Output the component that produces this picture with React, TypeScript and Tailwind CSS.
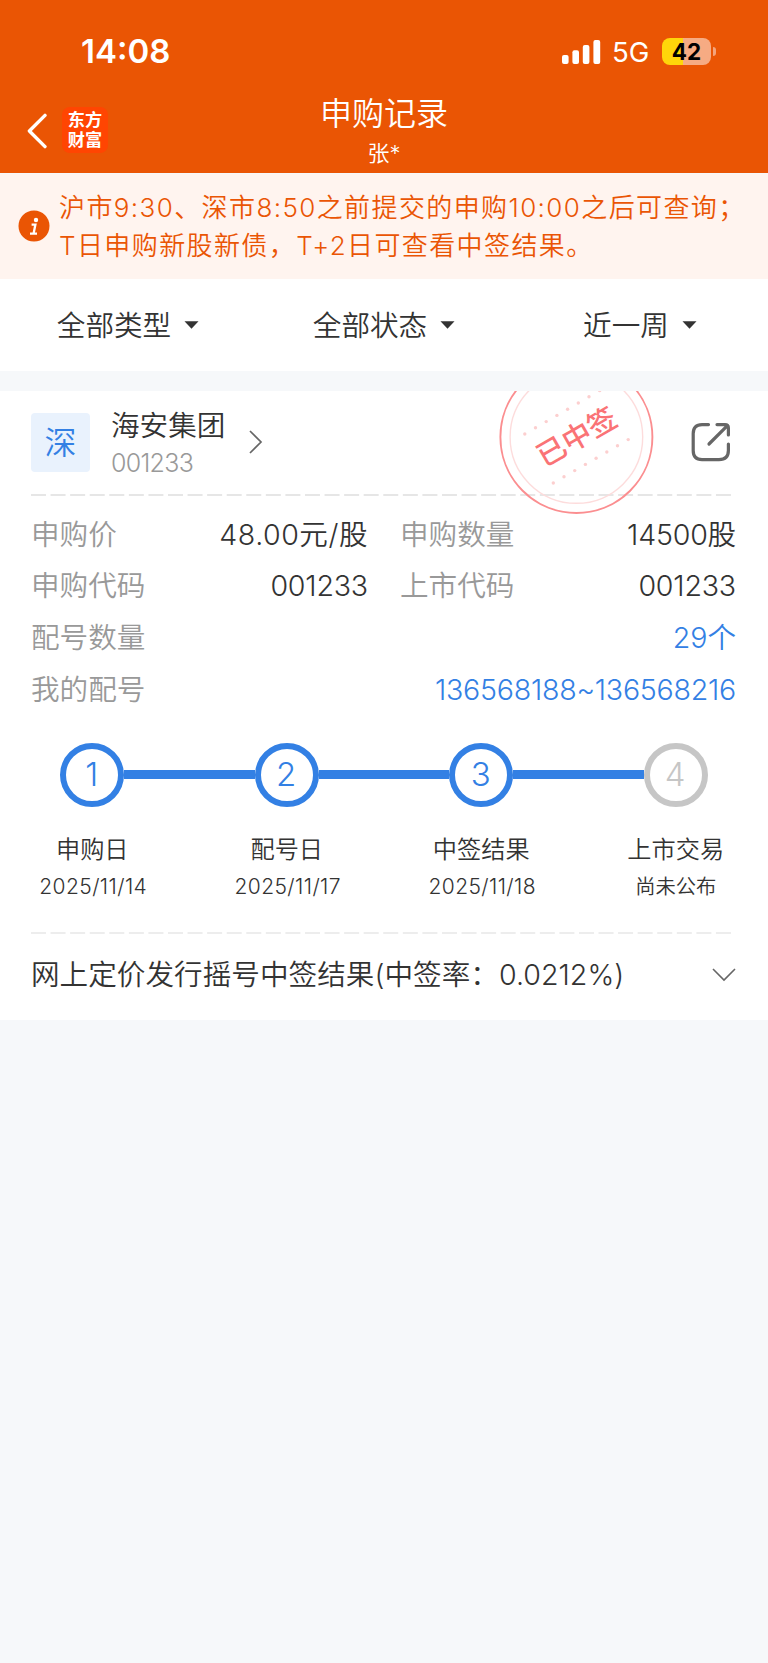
const FONT = "font-['Inter','Noto_Sans_CJK_SC',sans-serif]";

function StatusBar() {
  return (
    <div className="flex h-[103px] items-center justify-between pl-[81px] pr-[52px]">
      <div className="-mt-px text-[33px] leading-[40px] font-semibold">14:08</div>
      <div className="flex items-center">
        <svg className="h-[24px] w-[39px]" viewBox="0 0 39 24" fill="currentColor">
          <rect x="0" y="15" width="6.6" height="9" rx="2" />
          <rect x="10.4" y="10.3" width="6.6" height="13.7" rx="2" />
          <rect x="20.8" y="5" width="6.6" height="19" rx="2" />
          <rect x="31.4" y="0" width="6.8" height="24" rx="2" />
        </svg>
        <div className="ml-[11px] w-[38px] text-[27.6px] leading-[32px] font-normal whitespace-nowrap">5G</div>
        <div className="ml-[12px] flex h-[27px] w-[49px] items-center justify-center rounded-[8px] bg-[linear-gradient(90deg,#ffd60a_43%,#f6ab83_43%)] text-[22.5px] leading-[27px] font-bold text-black">
          42
        </div>
        <div className="ml-[2px] h-[9px] w-[3px] rounded-r-full bg-[#f4a47c]" />
      </div>
    </div>
  );
}

function TitleBar() {
  return (
    <div className="grid h-[70px] grid-cols-[1fr_auto_1fr]">
      <div className="flex items-start pt-[4px] pl-[26px]">
        <svg className="mt-[6px] h-[36px] w-[22px]" viewBox="0 0 22 36" fill="none" stroke="currentColor" strokeWidth="3.4" strokeLinecap="round" strokeLinejoin="round">
          <path d="M19 2.4 L3.4 18 L19 33.6" />
        </svg>
        <div className="ml-[14px] flex h-[46px] w-[46px] flex-col items-center justify-center rounded-[8px] bg-[#ff4502] text-[17.2px] leading-[20px] font-bold">
          <div>东方</div>
          <div>财富</div>
        </div>
      </div>
      <div className="flex flex-col items-center">
        <div className="-mt-[9px] text-[32px] leading-[40px]">申购记录</div>
        <div className="mt-[5px] text-[22px] leading-[28px]">张*</div>
      </div>
      <div />
    </div>
  );
}

function Notice() {
  return (
    <div className="mt-px flex h-[105px] items-center bg-[#fff4ef] pl-[18px] text-[#ea5504]">
      <svg className="-mt-px h-[32px] w-[32px]" viewBox="0 0 32 32">
        <circle cx="16" cy="16" r="15.5" fill="#ea5504" />
        <circle cx="18" cy="10" r="2.2" fill="#fff" />
        <path d="M13.6 14.6 H17.4 L15.6 23.4 M12 23.6 H19" fill="none" stroke="#fff" strokeWidth="2.3" />
      </svg>
      <div className="ml-[9px] text-[26px] leading-[37.5px] tracking-[1.4px] whitespace-nowrap">
        <div>沪市9:30、深市8:50之前提交的申购10:00之后可查询；</div>
        <div>T日申购新股新债，T+2日可查看中签结果。</div>
      </div>
    </div>
  );
}

function Filters() {
  return (
    <div className="grid h-[92px] grid-cols-3 bg-white pt-[2px]">
      {["全部类型", "全部状态", "近一周"].map((name) => (
        <div key={name} className="flex items-center justify-center text-[28.6px] leading-[40px]">
          {name}
          <svg className="-mt-[2px] ml-[13px] h-[8px] w-[15px]" viewBox="0 0 15 8">
            <path d="M0.5 0.3 H14.5 L7.5 7.8 Z" fill="#333" />
          </svg>
        </div>
      ))}
    </div>
  );
}

const DOTS = [0, 1, 2, 3, 4, 5, 6, 7];

function Stamp() {
  return (
    <div className="absolute top-0 left-[499px] h-[124px] w-[156px] overflow-hidden">
      <svg className="h-[124px] w-[156px]" viewBox="0 0 156 124">
        <circle cx="77.4" cy="46" r="76" fill="none" stroke="#fb8e90" strokeWidth="1.9" />
        <circle cx="77.4" cy="46" r="66.3" fill="none" stroke="#fddcdc" strokeWidth="1.4" />
        {DOTS.map((i) => (
          <g key={i} fill="#fccfcf">
            <circle cx={25.8 + i * 10.7} cy={43 - i * 6.2} r="1.7" />
            <circle cx={54.3 + i * 10.7} cy={92 - i * 6.2} r="1.7" />
          </g>
        ))}
      </svg>
      <div className="absolute top-[26px] left-[28px] w-[100px] -rotate-30 text-center text-[29px] leading-[40px] font-medium text-[#fa7376]">
        已中签
      </div>
    </div>
  );
}

function Dashes({ className }: { className: string }) {
  return (
    <svg className="block h-[2px] w-[702px]" viewBox="0 0 702 2">
      <line x1="0" y1="1" x2="702" y2="1" strokeDasharray="15 4.57" className={className} />
    </svg>
  );
}

interface FieldProps {
  label: string;
  value: string;
  className: string;
  valueClass?: string;
}

function Field({ label, value, className, valueClass = "" }: FieldProps) {
  return (
    <div className={`flex justify-between ${className}`}>
      <span className="text-[#999]">{label}</span>
      <span className={valueClass}>{value}</span>
    </div>
  );
}

const STEPS = [
  { name: "申购日", date: "2025/11/14", done: true },
  { name: "配号日", date: "2025/11/17", done: true },
  { name: "中签结果", date: "2025/11/18", done: true },
  { name: "上市交易", date: "尚未公布", done: false },
];

function Steps() {
  return (
    <div className="mt-[33px] -ml-[36px] flex w-[778px]">
      {STEPS.map((s, i) => (
        <div key={s.name} className="flex w-[194.5px] flex-col items-center">
          <div className="flex w-full items-center">
            <div className={i > 0 ? "h-[8.4px] flex-1 bg-[#3380e4]" : "flex-1"} />
            <div
              className={`flex h-[64px] w-[64px] items-center justify-center rounded-full border-[6.4px] pr-px pb-px text-[33px] leading-[40px] font-light ${
                s.done ? "border-[#3380e4] text-[#3380e4]" : "border-[#c6c6c6] text-[#c6c6c6]"
              }`}
            >
              {i + 1}
            </div>
            <div className={i < 3 ? "h-[8.4px] flex-1 bg-[#3380e4]" : "flex-1"} />
          </div>
          <div className="mt-[27px] text-[24.2px] leading-[32px]">{s.name}</div>
          <div className={`mt-[7px] leading-[28px] ${s.done ? "pl-[2px] text-[21px] tracking-[0.4px]" : "text-[20.3px]"}`}>{s.date}</div>
        </div>
      ))}
    </div>
  );
}

function Card() {
  return (
    <section className="relative mt-[20px] h-[629px] bg-white pr-[32px] pl-[31px] text-[28.6px] leading-[40px]">
      <Stamp />
      <div className="flex h-[103px] pt-[22px]">
        <div className="flex h-[59px] w-[59px] items-center justify-center rounded-[4px] bg-[#e9f2fd] text-[32px] text-[#3380e4]">深</div>
        <div className="ml-[21px] -mt-[7px] w-[115px] whitespace-nowrap">
          <div>海安集团</div>
          <div className="mt-px text-[25px] leading-[32px] font-light tracking-[-0.7px] text-[#999]">001233</div>
        </div>
        <svg className="mt-[17px] ml-[23px] h-[24px] w-[14px]" viewBox="0 0 14 24" fill="none" stroke="#666" strokeWidth="1.7">
          <path d="M1 1 L12 12 L1 23" />
        </svg>
        <svg className="mt-[8px] mr-[4px] ml-auto h-[42px] w-[42px]" viewBox="0 0 42 42" fill="none" stroke="#666" strokeWidth="3.2" strokeLinecap="round" strokeLinejoin="round">
          <path d="M18.5 3.6 H12 Q3.2 3.6 3.2 12.5 V29.5 Q3.2 38.6 12 38.6 H29 Q38.4 38.6 38.4 29.5 V23 M27 3.6 H35 Q38.4 3.6 38.4 7 V14 M37.4 4.6 L19 23" />
        </svg>
      </div>
      <Dashes className="stroke-[#dedede] stroke-[1.3px]" />
      <div className="mt-[19px] flex h-[51px]">
        <Field label="申购价" value="48.00元/股" className="w-[337px]" valueClass="tracking-[0.5px]" />
        <Field label="申购数量" value="14500股" className="ml-[32px] w-[336px]" valueClass="tracking-[-0.2px]" />
      </div>
      <div className="flex h-[52px]">
        <Field label="申购代码" value="001233" className="w-[337px]" valueClass="tracking-[-0.2px]" />
        <Field label="上市代码" value="001233" className="ml-[32px] w-[336px]" valueClass="tracking-[-0.2px]" />
      </div>
      <Field label="配号数量" value="29个" className="h-[51.5px] text-[#3380e4]" />
      <Field label="我的配号" value="136568188~136568216" className="h-[40px] text-[#3380e4]" valueClass="tracking-[-0.25px]" />
      <Steps />
      <div className="mt-[31px]">
        <Dashes className="stroke-[#ededed] stroke-[2px]" />
      </div>
      <div className="mt-[21px] flex items-center justify-between">
        <span className="tracking-[0.03px] whitespace-pre">网上定价发行摇号中签结果(中签率：0.0212%)</span>
        <svg className="h-[14px] w-[24px]" viewBox="0 0 24 14" fill="none" stroke="#666" strokeWidth="1.6">
          <path d="M1 1 L12 12 L23 1" />
        </svg>
      </div>
    </section>
  );
}

export default function App() {
  return (
    <div lang="zh-CN" className={`min-h-[1663px] w-[768px] overflow-hidden bg-[#f6f8fa] font-[350] text-[#333] ${FONT}`}>
      <header className="bg-[#ea5504] text-white">
        <StatusBar />
        <TitleBar />
      </header>
      <Notice />
      <Filters />
      <Card />
    </div>
  );
}
